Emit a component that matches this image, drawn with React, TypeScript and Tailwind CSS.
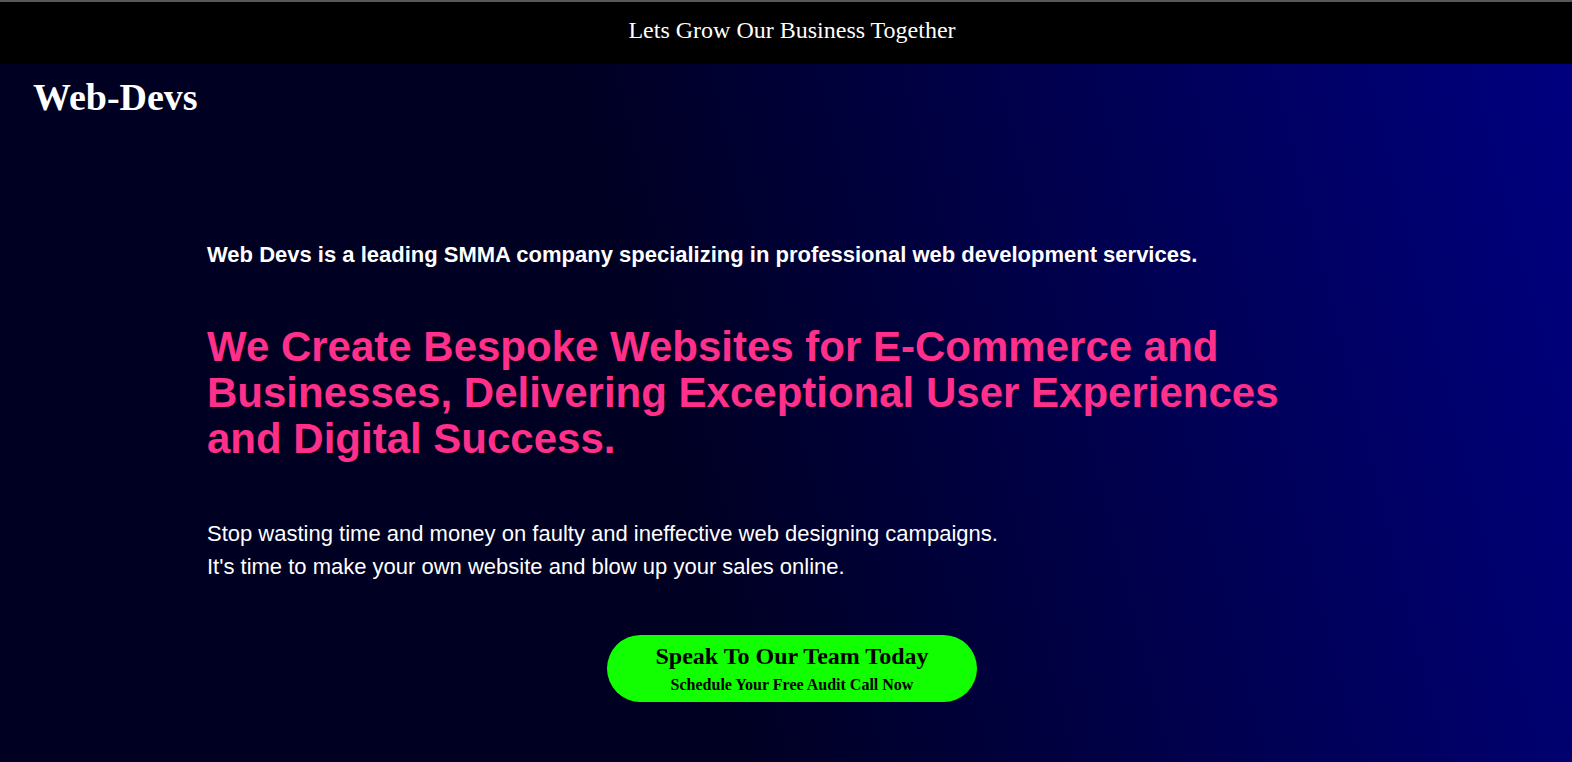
import React from "react";

const serif = "font-['Times_New_Roman','Liberation_Serif',serif]";
const sans = "font-['Arial','Liberation_Sans',sans-serif]";

const App: React.FC = () => {
  return (
    <div className="min-h-screen w-full bg-black">
      <div className="h-[2px] w-full bg-[#585858]" />
      <div className={`flex h-[62px] items-center justify-center pb-[6px] pl-[12px] bg-black ${serif}`}>
        <p className="text-[24px] text-white">Lets Grow Our Business Together</p>
      </div>
      <div className="flex h-[698px] flex-col bg-[linear-gradient(76deg,#000022_42%,#000080_100%)]">
        <div className="px-[33px] pt-[11px]">
          <h1 className={`text-[38px] font-bold leading-[44px] text-white ${serif}`}>Web-Devs</h1>
        </div>
        <div className={`pl-[207px] pr-[200px] pt-[122px] ${sans}`}>
          <p className="text-[22px] font-bold leading-[28px] text-white">
            Web Devs is a leading SMMA company specializing in professional web development services.
          </p>
          <h2 className="mt-[55px] max-w-[1100px] text-[42px] font-bold leading-[46px] text-[#ff2f8a]">
            We Create Bespoke Websites for E-Commerce and Businesses, Delivering Exceptional User Experiences
            and Digital Success.
          </h2>
          <div className="mt-[55px] text-[22px] leading-[33px] text-white">
            <p>Stop wasting time and money on faulty and ineffective web designing campaigns.</p>
            <p>It's time to make your own website and blow up your sales online.</p>
          </div>
        </div>
        <div className="flex justify-center pl-[12px] pt-[52px]">
          <button
            className={`flex h-[67px] w-[370px] flex-col items-center justify-center rounded-full bg-[#11ff00] text-black ${serif}`}
          >
            <span className="text-[24px] font-bold leading-[28px]">Speak To Our Team Today</span>
            <span className="mt-[5px] text-[16px] font-bold leading-[20px]">Schedule Your Free Audit Call Now</span>
          </button>
        </div>
      </div>
    </div>
  );
};

export default App;
